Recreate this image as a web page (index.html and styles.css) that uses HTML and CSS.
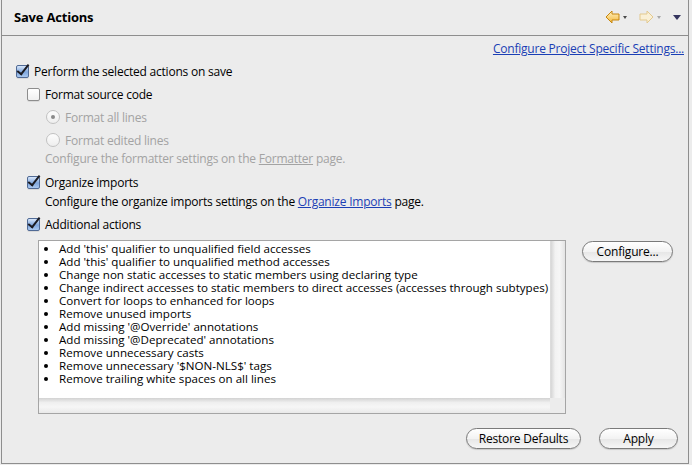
FILE: index.html
```html
<!DOCTYPE html>
<html>
<head>
<meta charset="utf-8">
<link rel="stylesheet" href="styles.css">
</head>
<body>
<div class="frame">
  <div class="header">
    <div class="title">Save Actions</div>
    <div class="tools">
      <svg class="arrow" width="15" height="14" viewBox="0 0 15 14">
        <defs>
          <linearGradient id="gy" x1="0" y1="0" x2="0" y2="1">
            <stop offset="0" stop-color="#fff3c4"/>
            <stop offset="1" stop-color="#f4b73a"/>
          </linearGradient>
        </defs>
        <path d="M1 7 L7 1 L7 4 L14 4 L14 10 L7 10 L7 13 Z" fill="url(#gy)" stroke="#c6860f" stroke-width="1" stroke-linejoin="round"/>
      </svg>
      <span class="tri small"></span>
      <svg class="arrow fwd" width="15" height="14" viewBox="0 0 15 14">
        <path d="M14 7 L8 1 L8 4 L1 4 L1 10 L8 10 L8 13 Z" fill="#faf0d6" stroke="#e3c98e" stroke-width="1" stroke-linejoin="round"/>
      </svg>
      <span class="tri small faded"></span>
      <span class="tri big"></span>
    </div>
  </div>
  <div class="content">
    <div class="linkrow"><a class="link">Configure Project Specific Settings...</a></div>

    <div class="row r-perform lvl0"><span class="cb checked"></span><span>Perform the selected actions on save</span></div>
    <div class="row r-format lvl1"><span class="cb"></span><span>Format source code</span></div>
    <div class="row r-radio lvl2 disabled"><span class="rb on"></span><span>Format all lines</span></div>
    <div class="row r-radio lvl2 disabled"><span class="rb"></span><span>Format edited lines</span></div>
    <div class="hint r-hint1 lvl1t disabled">Configure the formatter settings on the <span class="ul">Formatter</span> page.</div>
    <div class="row r-org lvl1"><span class="cb checked"></span><span>Organize imports</span></div>
    <div class="hint r-hint2 lvl1t">Configure the organize imports settings on the <a class="link">Organize Imports</a> page.</div>
    <div class="row r-add lvl1"><span class="cb checked"></span><span>Additional actions</span></div>

    <div class="actions">
      <div class="listbox">
        <div class="listmain">
          <ul class="items">
            <li>Add 'this' qualifier to unqualified field accesses</li>
            <li>Add 'this' qualifier to unqualified method accesses</li>
            <li>Change non static accesses to static members using declaring type</li>
            <li>Change indirect accesses to static members to direct accesses (accesses through subtypes)</li>
            <li>Convert for loops to enhanced for loops</li>
            <li>Remove unused imports</li>
            <li>Add missing '@Override' annotations</li>
            <li>Add missing '@Deprecated' annotations</li>
            <li>Remove unnecessary casts</li>
            <li>Remove unnecessary '$NON-NLS$' tags</li>
            <li>Remove trailing white spaces on all lines</li>
          </ul>
          <div class="vscroll"></div>
        </div>
        <div class="hbar"><div class="hscroll"></div><div class="corner"></div></div>
      </div>
      <button class="btn configure">Configure...</button>
    </div>

    <div class="bottom">
      <button class="btn restore">Restore Defaults</button>
      <button class="btn apply">Apply</button>
    </div>
  </div>
</div>
</body>
</html>
```
FILE: styles.css
```css
html, body {
  margin: 0;
  padding: 0;
  background: #ececec;
}
body {
  font-family: "Open Sans", "DejaVu Sans", sans-serif;
  font-size: 12px;
  letter-spacing: -0.22px;
  color: #000;
}
.frame {
  width: 686px;
  height: 463px;
  margin-left: 1px;
  border-left: 1px solid #8e8e8e;
  border-right: 1px solid #8e8e8e;
  border-bottom: 1px solid #8e8e8e;
  box-sizing: content-box;
}
.header {
  border-bottom: 1px solid #8e8e8e;
  display: flex;
  align-items: center;
  justify-content: space-between;
  box-sizing: border-box;
  height: 36px;
  padding-left: 12px;
  padding-right: 7px;
}
.title {
  font-weight: bold;
  font-size: 13px;
  letter-spacing: -0.2px;
  margin-top: -1px;
}
.tools {
  display: flex;
  align-items: center;
  margin-top: -1px;
}
.arrow { display: block; }
.tri {
  display: block;
  width: 0;
  height: 0;
  border-style: solid;
  border-color: transparent;
}
.tri.small {
  border-width: 3px 2.5px 0 2.5px;
  border-top-color: #4a4a4a;
  margin: 1px 12px 0 3px;
}
.tri.small.faded { border-top-color: #a8a8a8; margin-right: 12px; }
.tri.big {
  border-width: 5px 4px 0 4px;
  border-top-color: #35355e;
  margin-top: 1px;
}
.linkrow {
  height: 16px;
  margin-top: 4px;
  display: flex;
  justify-content: flex-end;
  align-items: center;
  padding-right: 4px;
}
.link {
  color: #1b3fb5;
  text-decoration: underline;
  cursor: pointer;
}
.row {
  height: 20px;
  display: flex;
  align-items: center;
}
.lvl0 { padding-left: 14px; }
.lvl1 { padding-left: 25px; }
.lvl2 { padding-left: 44px; }
.lvl1t { padding-left: 43px; }
.r-perform { margin-top: 5px; }
.r-format { margin-top: 3px; }
.r-radio { margin-top: 3px; }
.r-org { margin-top: 6px; }
.r-add { margin-top: 5px; }
.hint {
  height: 16px;
  display: flex;
  align-items: center;
  white-space: pre;
}
.r-hint1 { margin-top: 0; }
.r-hint2 { margin-top: 1px; }
.disabled { color: #a3a3a3; }
.ul { text-decoration: underline; }

.cb {
  width: 13px;
  height: 13px;
  box-sizing: border-box;
  border: 1px solid #8d8d8d;
  border-radius: 2px;
  background: linear-gradient(#ffffff, #f0f0f0);
  margin-right: 5px;
  position: relative;
  box-shadow: 0 1px 0 rgba(0,0,0,0.08);
  flex: none;
}
.cb.checked {
  border-color: #506a95;
  background: linear-gradient(#d8e7fb, #7fa6dc 55%, #a9c8f0);
}
.cb.checked::after {
  content: "";
  position: absolute;
  left: 3px;
  top: -4px;
  width: 4px;
  height: 11px;
  border-right: 2.5px solid #1b1b22;
  border-bottom: 2px solid #1b1b22;
  transform: rotate(38deg);
}
.rb {
  width: 14px;
  height: 14px;
  box-sizing: border-box;
  border: 1px solid #c2c2c2;
  border-radius: 50%;
  background: linear-gradient(#fdfdfd, #eeeeee);
  margin-right: 5px;
  position: relative;
  flex: none;
}
.rb.on::after {
  content: "";
  position: absolute;
  left: 4px;
  top: 4px;
  width: 4px;
  height: 4px;
  border-radius: 50%;
  background: #8a8a8a;
}

.actions {
  display: flex;
  align-items: flex-start;
  margin-top: 6px;
  padding-left: 36px;
}
.listbox {
  width: 528px;
  height: 174px;
  box-sizing: border-box;
  border: 1px solid #a5a5a5;
  background: #fff;
  display: flex;
  flex-direction: column;
}
.listmain {
  flex: 1;
  display: flex;
  min-height: 0;
}
.items {
  flex: 1;
  margin: 0;
  padding: 1px 0 0 20px;
  font-size: 11.6px;
  letter-spacing: 0;
  line-height: 13px;
  overflow: hidden;
  white-space: nowrap;
}
.vscroll {
  width: 14px;
  background: linear-gradient(90deg, #d6d6d6, #f2f2f2 30%, #f6f6f6 60%, #e4e4e4);
  border-left: 1px solid #dcdcdc;
}
.hbar {
  height: 15px;
  display: flex;
  flex: none;
}
.hscroll {
  flex: 1;
  background: linear-gradient(#d2d2d2, #efefef 30%, #f6f6f6 60%, #e9e9e9);
}
.corner {
  width: 15px;
  background: #ececec;
}
.btn {
  font-family: "Open Sans", "DejaVu Sans", sans-serif;
  font-size: 12px;
  letter-spacing: -0.2px;
  color: #000;
  border: 1px solid #7a7a7a;
  border-radius: 11px;
  background: linear-gradient(#ffffff, #f3f3f3 50%, #e6e6e6 51%, #f6f6f6);
  box-shadow: 0 1px 1px rgba(0,0,0,0.15);
  padding: 0;
  height: 21px;
  line-height: 18px;
}
.configure {
  width: 91px;
  margin-left: 16px;
  margin-top: 1px;
}
.bottom {
  display: flex;
  justify-content: flex-end;
  margin-top: 14px;
  padding-right: 10px;
  gap: 18px;
}
.restore { width: 115px; }
.apply { width: 79px; }
```
